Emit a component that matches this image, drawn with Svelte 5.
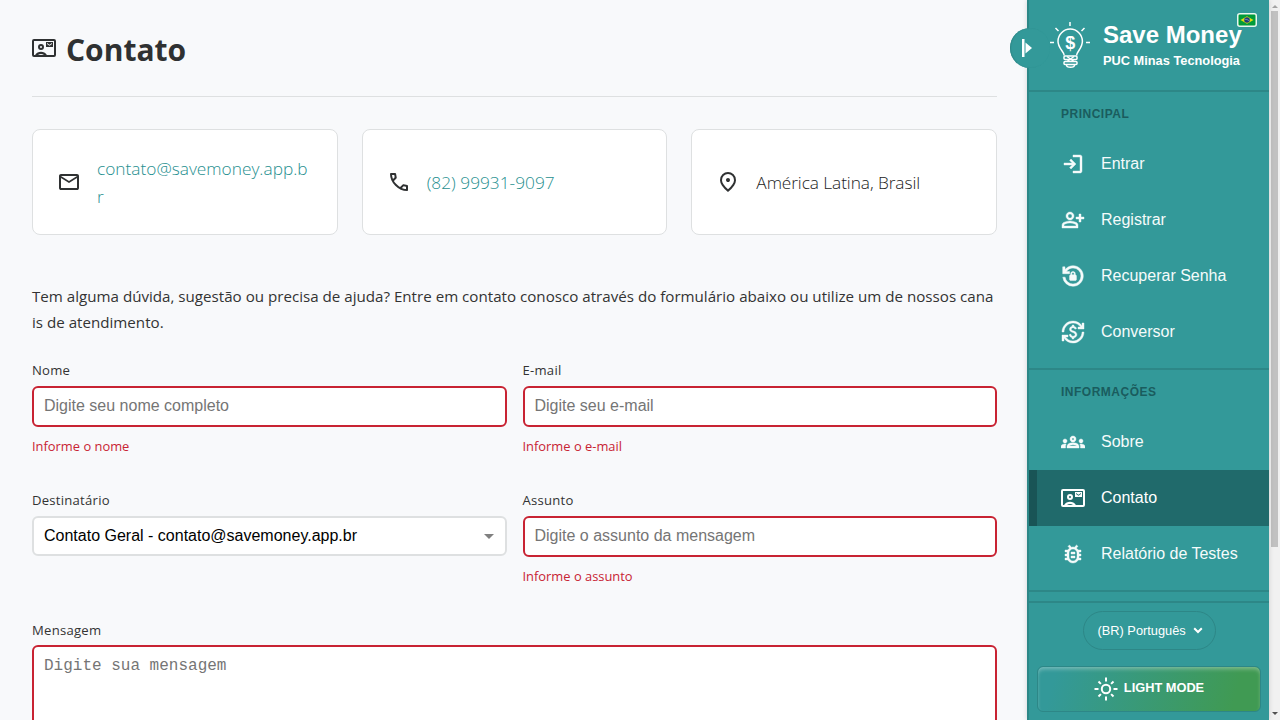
<script>
  const login = 'M480-120v-80h280v-560H480v-80h280q33 0 56.5 23.5T840-760v560q0 33-23.5 56.5T760-120H480Zm-80-160-55-58 102-102H120v-80h327L345-622l55-58 200 200-200 200Z';
  const register = 'M720-400v-120H600v-80h120v-120h80v120h120v80H800v120h-80Zm-360-80q-66 0-113-47t-47-113q0-66 47-113t113-47q66 0 113 47t47 113q0 66-47 113t-113 47ZM40-160v-112q0-34 17.5-62.5T104-378q62-31 126-46.5T360-440q66 0 130 15.5T616-378q29 15 46.5 43.5T680-272v112H40Zm80-80h480v-32q0-11-5.5-20T580-306q-54-27-109-40.5T360-360q-56 0-111 13.5T140-306q-9 5-14.5 14t-5.5 20v32Zm240-320q33 0 56.5-23.5T440-640q0-33-23.5-56.5T360-720q-33 0-56.5 23.5T280-640q0 33 23.5 56.5T360-560Z';
  const reset = 'M480-120q-138 0-240.5-91.5T122-440h82q14 104 92.5 172T480-200q117 0 198.5-81.5T760-480q0-117-81.5-198.5T480-760q-69 0-129 32t-101 88h110v80H120v-240h80v94q51-64 124.5-99T480-840q75 0 140.5 28.5t114 77q48.5 48.5 77 114T840-480q0 75-28.5 140.5t-77 114q-48.5 48.5-114 77T480-120ZM400-320q-17 0-28.5-11.5T360-360v-120q0-17 11.5-28.5T400-520v-40q0-33 23.5-56.5T480-640q33 0 56.5 23.5T560-560v40q17 0 28.5 11.5T600-480v120q0 17-11.5 28.5T560-320H400Zm40-200h80v-40q0-17-11.5-28.5T480-600q-17 0-28.5 11.5T440-560v40Z';
  const currency = 'M480-40q-112 0-206-51T120-227v107H40v-240h240v80h-99q48 72 126.5 116T480-120q75 0 140.5-28.5t114-77q48.5-48.5 77-114T840-480h80q0 91-34.5 171T791-169q-60 60-140 94.5T480-40Zm-36-160v-52q-47-11-76.5-40.5T324-370l66-26q12 41 37.5 61.5T486-314q33 0 56.5-15.5T566-378q0-29-24.5-47T454-466q-59-21-86.5-50T340-592q0-41 28.5-74.5T446-710v-50h70v50q36 3 65.5 29t40.5 61l-64 26q-8-23-26-38.5T482-648q-35 0-53.5 15T410-592q0 26 23 41t83 35q72 26 96 61t24 77q0 29-10 51t-26.5 37.5Q583-274 561-264.5T514-250v50h-70ZM40-480q0-91 34.5-171T169-791q60-60 140-94.5T480-920q112 0 206 51t154 136v-107h80v240H680v-80h99q-48-72-126.5-116T480-840q-75 0-140.5 28.5t-114 77q-48.5 48.5-77 114T120-480H40Z';
  const groups = 'M0-240v-63q0-43 44-70t116-27q13 0 25 .5t23 2.5q-14 21-21 44t-7 48v65H0Zm240 0v-65q0-32 17.5-58.5T307-410q32-20 76.5-30t96.5-10q53 0 97.5 10t76.5 30q32 20 49 46.5t17 58.5v65H240Zm540 0v-65q0-26-6.5-49T754-397q11-2 22.5-2.5t23.5-.5q72 0 116 26.5t44 70.5v63H780Zm-455-80h311q-10-20-55.5-35T480-370q-55 0-100.5 15T325-320ZM160-440q-33 0-56.5-23.5T80-520q0-34 23.5-57t56.5-23q34 0 57 23t23 57q0 33-23 56.5T160-440Zm640 0q-33 0-56.5-23.5T720-520q0-34 23.5-57t56.5-23q34 0 57 23t23 57q0 33-23 56.5T800-440Zm-320-40q-50 0-85-35t-35-85q0-51 35-85.5t85-34.5q51 0 85.5 34.5T600-600q0 50-34.5 85T480-480Zm0-80q17 0 28.5-11.5T520-600q0-17-11.5-28.5T480-640q-17 0-28.5 11.5T440-600q0 17 11.5 28.5T480-560Z';
  const bug = 'M480-200q66 0 113-47t47-113v-160q0-66-47-113t-113-47q-66 0-113 47t-47 113v160q0 66 47 113t113 47Zm-80-120h160v-80H400v80Zm0-160h160v-80H400v80Zm80 360q-65 0-120.5-32T272-240H160v-80h84q-3-20-3.5-40t-.5-40h-80v-80h80q0-20 .5-40t3.5-40h-84v-80h112q14-23 31.5-43t40.5-35l-64-66 56-56 86 86q28-9 57-9t57 9l88-86 56 56-66 66q23 15 41.5 34.5T688-640h112v80h-84q3 20 3.5 40t.5 40h80v80h-80q0 20-.5 40t-3.5 40h84v80H688q-32 56-87.5 88T480-120Z';
  const mail = 'M160-160q-33 0-56.5-23.5T80-240v-480q0-33 23.5-56.5T160-800h640q33 0 56.5 23.5T880-720v480q0 33-23.5 56.5T800-160H160Zm320-280L160-640v400h640v-400L480-440Zm0-80 320-200H160l320 200Z';
  const phone = 'M798-120q-125 0-247-54.5T329-329Q229-429 174.5-551T120-798q0-18 12-30t30-12h162q14 0 25 9.5t13 22.5l26 140q2 16-1 27t-11 19l-97 98q20 37 47.5 71.5T387-386q31 31 65 57.5t72 48.5l94-94q9-9 23.5-13.5T670-390l138 28q14 4 23 14.5t9 23.5v162q0 18-12 30t-30 12ZM241-600l66-66-17-94h-89q5 41 14 81t26 79Zm358 358q39 17 79.5 27t81.5 13v-88l-94-19-67 67Z';
  const pin = 'M480-480q33 0 56.5-23.5T560-560q0-33-23.5-56.5T480-640q-33 0-56.5 23.5T400-560q0 33 23.5 56.5T480-480Zm0 294q122-112 181-203.5T720-552q0-109-69.5-178.5T480-800q-101 0-170.5 69.5T240-552q0 71 59 162.5T480-186Zm0 106Q319-217 239.5-334.5T160-552q0-150 96.5-239T480-880q127 0 223.5 89T800-552q0 100-79.5 217.5T480-80Z';

  const sections = [
    { title: 'PRINCIPAL', items: [
      { label: 'Entrar', icon: login },
      { label: 'Registrar', icon: register },
      { label: 'Recuperar Senha', icon: reset, box: '60 -900 840 840' },
      { label: 'Conversor', icon: currency },
    ] },
    { title: 'INFORMAÇÕES', items: [
      { label: 'Sobre', icon: groups },
      { label: 'Contato', card: true, active: true },
      { label: 'Relatório de Testes', icon: bug },
    ] },
  ];
</script>

{#snippet glyph(d, box = '0 -960 960 960')}
  <svg class="icon bold" viewBox={box}><path {d} /></svg>
{/snippet}

{#snippet contactCard()}
  <svg class="icon" viewBox="0 0 24 24">
    <path fill-rule="evenodd" d="M2 3h20a2 2 0 0 1 2 2v14a2 2 0 0 1-2 2H2a2 2 0 0 1-2-2V5a2 2 0 0 1 2-2Zm0 2v14h1.1c1.4-2 3.5-3.2 5.9-3.2s4.500 1.200 5.900 3.200H22V5Zm4 14h6c-.9-.7-1.900-1-3-1s-2.100.3-3 1Z" />
    <path fill-rule="evenodd" d="M9 8a3 3 0 1 1 0 6 3 3 0 0 1 0-6Zm0 2a1 1 0 1 0 0 2 1 1 0 0 0 0-2ZM14 6h7v5h-7Zm1 1v1l2.500 1.750L20 8V7l-2.500 1.750Z" />
  </svg>
{/snippet}

<div class="page">
  <main>
    <h1>{@render contactCard()}<span>Contato</span></h1>

    <section class="cards">
      <div class="card">{@render glyph(mail)}<a href="#mail">contato@savemoney.app.br</a></div>
      <div class="card">{@render glyph(phone)}<a href="#phone">(82) 99931-9097</a></div>
      <div class="card">{@render glyph(pin)}<span>América Latina, Brasil</span></div>
    </section>

    <p class="intro">Tem alguma dúvida, sugestão ou precisa de ajuda? Entre em contato conosco através do formulário abaixo ou utilize um de nossos canais de atendimento.</p>

    <form>
      <label class="field"><span class="name">Nome</span><input placeholder="Digite seu nome completo" /><span class="error">Informe o nome</span></label>
      <label class="field"><span class="name">E-mail</span><input placeholder="Digite seu e-mail" /><span class="error">Informe o e-mail</span></label>
      <div class="field"><span class="name">Destinatário</span>
        <div class="select"><span>Contato Geral - contato@savemoney.app.br</span><i></i></div>
      </div>
      <label class="field"><span class="name">Assunto</span><input placeholder="Digite o assunto da mensagem" /><span class="error">Informe o assunto</span></label>
      <label class="field wide"><span class="name">Mensagem</span><textarea placeholder="Digite sua mensagem"></textarea></label>
    </form>
  </main>

  <aside>
    <button class="toggle" aria-label="Menu">
      <svg viewBox="0 0 10 18"><path d="M0 0h2.500v18H0Z" /><path d="M3.500 3.500 10 9l-6.500 5.500Z" /></svg>
    </button>

    <header>
      <svg class="bulb" viewBox="0 0 42 50">
        <g fill="none" stroke="#fff" stroke-width="1.500">
          <path d="M21 1v4M6.500 7l3 3M35.500 7l-3 3M1 21.500h4M37 21.500h4" />
          <path d="M15.200 34.500c0-4-6.200-7-6.200-14.200a12.200 12.200 0 0 1 24.400 0c0 7.200-5.800 10.200-5.800 14.200" />
          <rect x="15" y="35" width="13" height="3.500" rx="1" />
          <rect x="15" y="40.500" width="13" height="3" rx="1" />
          <path d="m18 35.500 7 5M25 35.500l-7 5M17.500 44c0 3 8 3 8 0" />
        </g>
        <text x="21.300" y="27.500">$</text>
      </svg>
      <div class="brand"><strong>Save Money</strong><small>PUC Minas Tecnologia</small></div>
      <svg class="flag" viewBox="0 0 20 14">
        <rect x=".75" y=".75" width="18.500" height="12.500" rx="2" fill="#009b3a" stroke="#e8f6ee" stroke-width="1.500" />
        <path d="m3.500 7 6.500-3.800L16.500 7 10 10.800Z" fill="#e5d90d" />
        <circle cx="10" cy="7" r="2.800" fill="#1b3c7c" />
        <path d="M7.700 6.300q2.500-.3 4.500 1.500" stroke="#b8cde0" stroke-width=".5" fill="none" />
      </svg>
    </header>

    {#each sections as s}
      <nav>
        <h2>{s.title}</h2>
        {#each s.items as item}
          <a href="#{item.label}" class:active={item.active}>
            {#if item.card}{@render contactCard()}{:else}{@render glyph(item.icon, item.box)}{/if}
            <span>{item.label}</span>
          </a>
        {/each}
      </nav>
    {/each}

    <footer>
      <div class="lang"><span>(BR) Português</span><svg viewBox="0 0 10 7"><path d="m1.200 1.200 3.800 3.800 3.800-3.800" /></svg></div>
      <button class="mode">
        <svg viewBox="0 0 24 24"><circle cx="12" cy="12" r="4.200" /><path d="M12 .5v4M12 19.500v4M.5 12h4M19.500 12h4M4.500 4.500l2.400 2.400M17.100 17.100l2.400 2.400M4.500 19.500l2.400-2.400M17.100 6.900l2.400-2.400" /></svg>
        <span>LIGHT MODE</span>
      </button>
    </footer>
  </aside>

  <div class="scroll"><i class="up"></i><b></b><i class="down"></i></div>
</div>

<style>
  :global(body) { overflow: hidden; }
  * { box-sizing: border-box; }
  a { text-decoration: none; color: inherit; }
  .page { display: flex; width: 1280px; height: 720px; overflow: hidden; background: #f8f9fb; color: #333; font-family: "Open Sans", sans-serif; }
  .icon { width: 24px; height: 24px; flex: none; fill: currentColor; display: block; }
  nav .bold path { stroke: currentColor; stroke-width: 16; }

  main { flex: 1; min-width: 0; padding: 0 30px 0 32px; }
  h1 { display: flex; align-items: center; gap: 10px; height: 97px; margin: 0 0 32px; border-bottom: 1px solid #dee0e1; font-size: 30px; line-height: 40px; font-weight: 700; color: #2f3132; }
  h1 span { padding-top: 3px; }
  .cards { display: grid; grid-template-columns: repeat(3, 1fr); gap: 24px; }
  .card { display: flex; align-items: center; gap: 16px; height: 106px; padding: 0 24px; background: #fff; border: 1px solid #dee0e1; border-radius: 8px; font-size: 17.300px; font-weight: 300; line-height: 28px; word-break: break-all; }
  .card a { color: #1f8f8f; }
  .card span { color: #1c1c1c; letter-spacing: -.08px; }
  .card .icon { color: #2f3132; }
  .card a, .card span { padding-top: 1px; }
  .intro { margin: 48px 0 0; font-size: 15.150px; line-height: 26px; word-break: break-all; }

  form { display: grid; grid-template-columns: 1fr 1fr; column-gap: 16px; margin-top: 24px; grid-auto-rows: 130px; }
  .field { display: flex; flex-direction: column; }
  .field > * { flex: none; }
  .wide { grid-column: 1 / -1; }
  .name { height: 27px; line-height: 22px; font-size: 13.100px; letter-spacing: .25px; }
  input, .select, textarea { border: 2px solid #c82333; border-radius: 6px; background: #fff; padding: 0 10px; font: 16px "Liberation Sans", Arial, sans-serif; outline: 0; width: 100%; }
  input { height: 41px; padding-bottom: 2px; }
  input::placeholder, textarea::placeholder { color: #757575; opacity: 1; }
  .select { display: flex; align-items: center; justify-content: space-between; height: 40px; border-color: #dee0e1; color: #000; }
  .select i { border: 5px solid transparent; border-top-color: #808080; border-bottom: 0; margin: 1px 1px 0 0; }
  textarea { height: 160px; padding: 10px; font: 16px "Courier New", "Liberation Mono", monospace; resize: none; display: block; }
  .wide .name { height: 26px; }
  .error { margin-top: 8px; line-height: 22px; font-size: 12.900px; color: #c82333; }

  aside { position: relative; width: 242px; flex: none; display: flex; flex-direction: column; background: #339999; border-left: 2px solid #2d8787; box-shadow: 0 0 5px rgba(0, 0, 0, .15); color: #fff; font-family: "Liberation Sans", Arial, sans-serif; }
  .toggle { position: absolute; left: -19px; top: 28px; width: 40px; height: 40px; padding: 0; border: 0; border-radius: 50%; background: #339999; box-shadow: inset 1px 0 1px #2d8787; }
  .toggle svg { position: absolute; left: 12px; top: 11px; width: 10px; height: 18px; fill: #fff; }
  header { position: relative; display: flex; gap: 12px; height: 92px; padding: 21px 0 0 20px; border-bottom: 2px solid #2d8787; }
  .bulb { width: 42px; height: 50px; flex: none; }
  .bulb text { fill: #fff; font: 700 18px "Liberation Sans", Arial, sans-serif; text-anchor: middle; }
  .brand { display: flex; flex-direction: column; }
  .brand strong { font-size: 24px; line-height: 28px; }
  .brand small { font-size: 12.800px; line-height: 15px; font-weight: 700; margin-top: 4px; white-space: nowrap; }
  .flag { position: absolute; left: 208px; top: 13px; width: 20px; height: 14px; }
  nav { border-bottom: 2px solid #2d8787; padding-bottom: 8px; }
  nav h2 { margin: 0; height: 44px; padding-left: 32px; font-size: 12px; line-height: 45px; letter-spacing: .5px; color: #1a5c5e; }
  nav a { display: flex; align-items: center; gap: 16px; height: 56px; padding-left: 32px; font-size: 16px; color: #f5fbfb; }
  nav a.active { background: #206a6b; border-left: 8px solid #195456; padding-left: 24px; color: #fff; }
  footer { margin-top: 9px; border-top: 2px solid #2d8787; flex: 1; padding: 8px 9px 0; display: flex; flex-direction: column; align-items: center; }
  .lang { display: flex; align-items: center; gap: 7px; height: 39px; width: 133px; padding: 0 0 0 14px; border: 1px solid #2d8787; border-radius: 20px; font-size: 12.800px; }
  .lang span { white-space: nowrap; }
  .lang svg { width: 10px; height: 7px; fill: none; stroke: #fff; stroke-width: 2; }
  .mode { display: flex; align-items: center; justify-content: center; gap: 6px; width: 224px; height: 46px; margin-top: 16px; padding: 0; border: 1px solid #2d8787; border-radius: 6px; color: #fff; background: linear-gradient(105deg, #339999 8%, #409a53 88%); box-shadow: inset 0 3px 4px -1px rgba(255, 255, 255, .35); font: 700 12.800px "Liberation Sans", Arial, sans-serif; }
  .mode svg { width: 24px; height: 24px; fill: none; stroke: #fff; stroke-width: 2; }
  .mode span { padding-bottom: 3px; }

  .scroll { width: 11px; background: #f1f1f1; display: flex; flex-direction: column; align-items: center; }
  .scroll b { width: 7px; height: 536px; background: #c1c1c1; }
  .scroll i { border: 3px solid transparent; }
  .scroll .up { border-bottom-color: #a3a3a3; border-top: 0; margin: 5px 0 3px; }
  .scroll .down { border-top-color: #505050; border-bottom: 0; margin-top: auto; margin-bottom: 5px; }
</style>
